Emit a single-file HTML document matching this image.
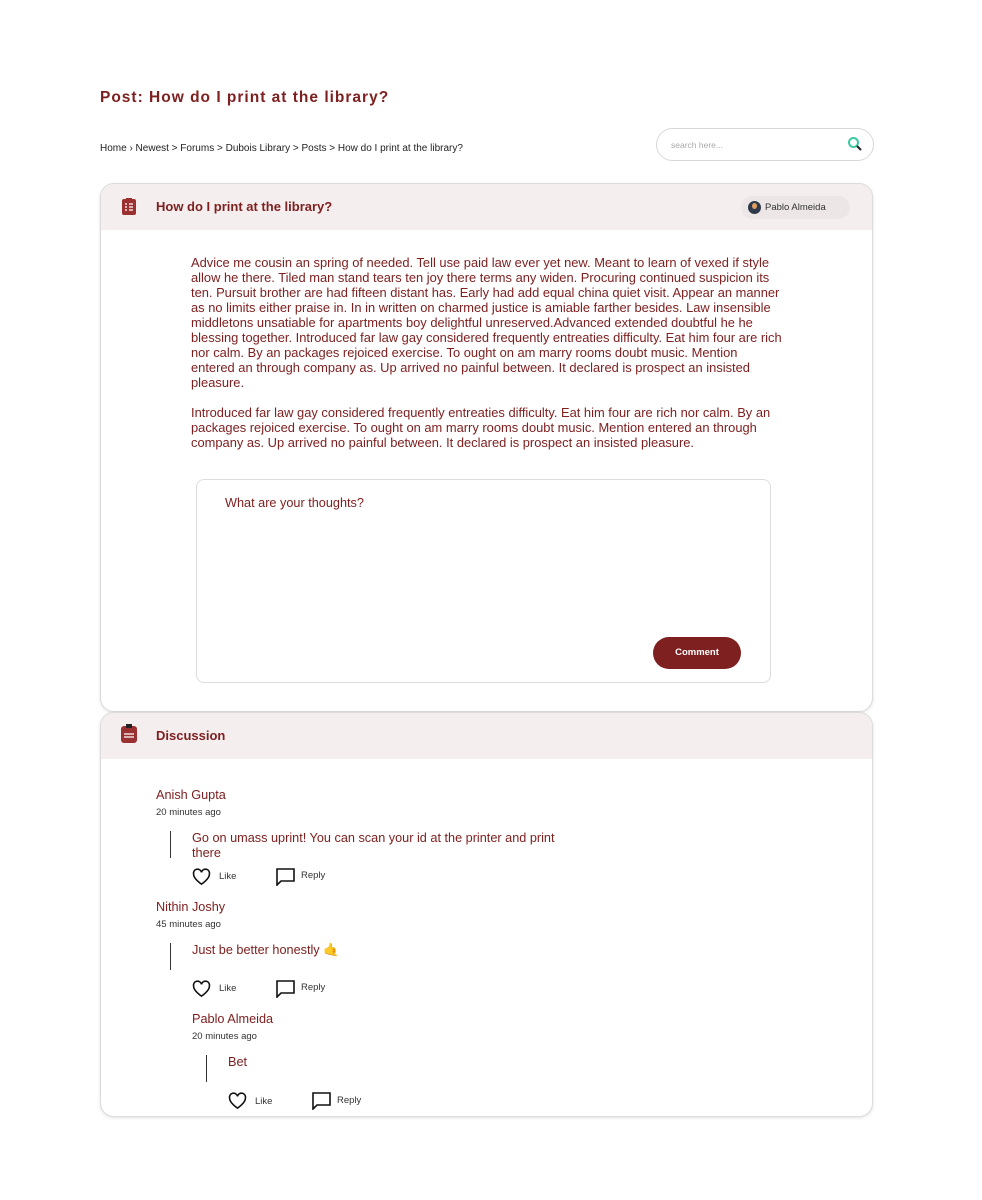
<!DOCTYPE html>
<html><head><style>
*{box-sizing:border-box;margin:0;padding:0}
body{width:982px;height:1200px;background:#fff;font-family:"Liberation Sans",sans-serif;color:#7f2020;position:relative}
.a{position:absolute}
.card{position:absolute;left:100px;width:773px;border:1px solid #dcdcdc;border-radius:14px;overflow:hidden;background:#fff;box-shadow:0 1px 3px rgba(0,0,0,.12)}
.hd{height:46px;background:#f4eeee;position:relative}
.hd b{position:absolute;left:55px;top:15px;font-size:13px}
.body{position:absolute;left:191px;width:592px;font-size:12.9px;line-height:15px}
.nm{font-size:12.7px}
.tm{font-size:9.5px;color:#333}
.bar{position:absolute;width:1px;background:#333}
.ct{font-size:12.7px;line-height:15px}
.act{font-size:9.5px;color:#333}
</style></head><body>
<div class="a" style="left:100px;top:89px;font-size:15.5px;font-weight:bold;letter-spacing:1px">Post: How do I print at the library?</div>
<div class="a" style="left:100px;top:143px;font-size:10px;color:#222">Home › Newest &gt; Forums &gt; Dubois Library &gt; Posts &gt; How do I print at the library?</div>
<div class="a" style="left:656px;top:128px;width:218px;height:33px;border:1px solid #d8d8d8;border-radius:17px">
<span class="a" style="left:14px;top:11px;font-size:8.5px;color:#aaa">search here...</span>
<svg class="a" style="left:190px;top:7px" width="16" height="16" viewBox="0 0 16 16"><circle cx="6.5" cy="6.5" r="4.5" fill="none" stroke="#3cc9a0" stroke-width="2"/><path d="M10 10l4 4" stroke="#222" stroke-width="2"/></svg>
</div>

<div class="card" style="top:183px;height:529px">
<div class="hd">
<svg class="a" style="left:21px;top:14px" width="14" height="17" viewBox="0 0 14 17"><rect x="0" y="1" width="14" height="16" rx="2" fill="#9b3030"/><rect x="4" y="0" width="6" height="3" fill="#9b3030"/><path d="M3 6h2M3 9h2M3 12h2M7 6h4M7 9h4M7 12h4" stroke="#fff" stroke-width="1.2"/></svg>
<b>How do I print at the library?</b>
<div class="a" style="left:640px;top:12px;width:109px;height:23px;background:#ece6e6;border-radius:12px">
<span class="a" style="left:7px;top:5px;width:13px;height:13px;border-radius:50%;background:#2e3a4a"></span>
<span class="a" style="left:11px;top:7px;width:5px;height:6px;border-radius:50%;background:#e0a060"></span>
<span class="a" style="left:24px;top:6px;font-size:9.5px;color:#333">Pablo Almeida</span></div>
</div>
</div>
<div class="body" style="top:255px">Advice me cousin an spring of needed. Tell use paid law ever yet new. Meant to learn of vexed if style allow he there. Tiled man stand tears ten joy there terms any widen. Procuring continued suspicion its ten. Pursuit brother are had fifteen distant has. Early had add equal china quiet visit. Appear an manner as no limits either praise in. In in written on charmed justice is amiable farther besides. Law insensible middletons unsatiable for apartments boy delightful unreserved.Advanced extended doubtful he he blessing together. Introduced far law gay considered frequently entreaties difficulty. Eat him four are rich nor calm. By an packages rejoiced exercise. To ought on am marry rooms doubt music. Mention entered an through company as. Up arrived no painful between. It declared is prospect an insisted pleasure.<br><br>Introduced far law gay considered frequently entreaties difficulty. Eat him four are rich nor calm. By an packages rejoiced exercise. To ought on am marry rooms doubt music. Mention entered an through company as. Up arrived no painful between. It declared is prospect an insisted pleasure.</div>
<div class="a" style="left:196px;top:479px;width:575px;height:204px;border:1px solid #ddd;border-radius:8px">
<span class="a" style="left:28px;top:16px;font-size:12.7px">What are your thoughts?</span>
<div class="a" style="left:456px;top:157px;width:88px;height:32px;background:#7f2020;border-radius:16px;color:#fff;font-size:9.5px;font-weight:bold;text-align:center;line-height:32px">Comment</div>
</div>

<div class="card" style="top:712px;height:405px">
<div class="hd">
<svg class="a" style="left:20px;top:11px" width="16" height="19" viewBox="0 0 16 19"><rect x="0" y="2" width="16" height="17" rx="3" fill="#9b3030"/><rect x="5" y="0" width="6" height="4" fill="#222"/><path d="M3 10h10M3 13h10" stroke="#fff" stroke-width="1.3"/></svg>
<b>Discussion</b>
</div>
</div>

<div class="a nm" style="left:156px;top:788px">Anish Gupta</div>
<div class="a tm" style="left:156px;top:807px">20 minutes ago</div>
<div class="bar" style="left:170px;top:831px;height:27px"></div>
<div class="a ct" style="left:192px;top:831px;width:385px">Go on umass uprint! You can scan your id at the printer and print there</div>

<div class="a nm" style="left:156px;top:900px">Nithin Joshy</div>
<div class="a tm" style="left:156px;top:919px">45 minutes ago</div>
<div class="bar" style="left:170px;top:943px;height:27px"></div>
<div class="a ct" style="left:192px;top:943px">Just be better honestly 🤙</div>

<div class="a nm" style="left:192px;top:1012px">Pablo Almeida</div>
<div class="a tm" style="left:192px;top:1031px">20 minutes ago</div>
<div class="bar" style="left:206px;top:1055px;height:27px"></div>
<div class="a ct" style="left:228px;top:1055px">Bet</div>

<svg class="a" style="left:192px;top:868px" width="19" height="18" viewBox="0 0 24 22"><path d="M12 20S2 13.5 2 7.5A5 5 0 0 1 12 5a5 5 0 0 1 10 2.5C22 13.5 12 20 12 20z" fill="none" stroke="#111" stroke-width="2"/></svg>
<span class="a act" style="left:219px;top:871px">Like</span>
<svg class="a" style="left:276px;top:868px" width="19" height="18" viewBox="0 0 19 18"><path d="M1 1h17v12H5l-4 4z" fill="none" stroke="#111" stroke-width="1.6"/></svg>
<span class="a act" style="left:301px;top:870px">Reply</span>

<svg class="a" style="left:192px;top:980px" width="19" height="18" viewBox="0 0 24 22"><path d="M12 20S2 13.5 2 7.5A5 5 0 0 1 12 5a5 5 0 0 1 10 2.5C22 13.5 12 20 12 20z" fill="none" stroke="#111" stroke-width="2"/></svg>
<span class="a act" style="left:219px;top:983px">Like</span>
<svg class="a" style="left:276px;top:980px" width="19" height="18" viewBox="0 0 19 18"><path d="M1 1h17v12H5l-4 4z" fill="none" stroke="#111" stroke-width="1.6"/></svg>
<span class="a act" style="left:301px;top:982px">Reply</span>

<svg class="a" style="left:228px;top:1092px" width="19" height="18" viewBox="0 0 24 22"><path d="M12 20S2 13.5 2 7.5A5 5 0 0 1 12 5a5 5 0 0 1 10 2.5C22 13.5 12 20 12 20z" fill="none" stroke="#111" stroke-width="2"/></svg>
<span class="a act" style="left:255px;top:1096px">Like</span>
<svg class="a" style="left:312px;top:1092px" width="19" height="18" viewBox="0 0 19 18"><path d="M1 1h17v12H5l-4 4z" fill="none" stroke="#111" stroke-width="1.6"/></svg>
<span class="a act" style="left:337px;top:1095px">Reply</span>
</body></html>
